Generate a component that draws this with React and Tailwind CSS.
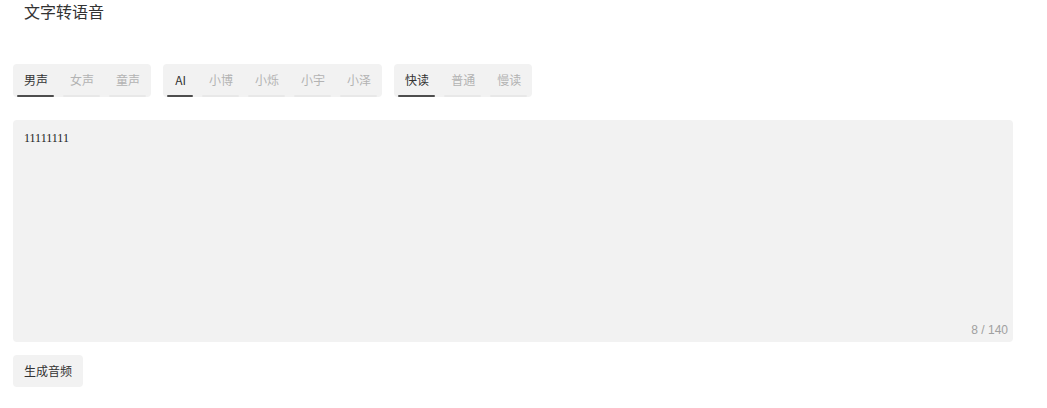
import React, { useEffect, useRef, useState } from "react";

const groups = [
  { items: ["男声", "女声", "童声"], active: 0 },
  { items: ["AI", "小博", "小烁", "小宇", "小泽"], active: 0 },
  { items: ["快读", "普通", "慢读"], active: 0 },
];

function TabGroup({ items, initial }) {
  const [active, setActive] = useState(initial);
  return (
    <div className="flex h-[33px] rounded bg-[#f2f2f2]">
      {items.map((label, i) => (
        <button
          key={label}
          onClick={() => setActive(i)}
          className="flex flex-col h-full min-w-[35px]"
        >
          <span
            className={`flex-1 flex items-center justify-center px-[11px] text-xs ${
              i === active ? "text-[#333]" : "text-[#b3b3b3]"
            }`}
          >
            {label}
          </span>
          <span
            className={`h-[2px] ml-1 mr-[5px] rounded-full ${
              i === active ? "bg-[#4d4d4d]" : "bg-[#e8e8e8]"
            }`}
          />
        </button>
      ))}
    </div>
  );
}

export default function App() {
  const [text, setText] = useState("11111111");
  const ref = useRef(null);

  useEffect(() => {
    const el = ref.current;
    if (el) {
      el.focus();
      el.setSelectionRange(el.value.length, el.value.length);
    }
  }, []);

  return (
    <div
      className="w-full min-h-screen bg-white px-[13px]"
      style={{ fontFamily: '"Noto Sans CJK SC", "Noto Sans", sans-serif' }}
    >
      <h1 className="pl-[11px] h-[22px] leading-[22px] text-base font-normal text-[#333]">
        文字转语音
      </h1>

      {/* voice options */}
      <div className="flex gap-3 mt-[42px]">
        {groups.map((g, i) => (
          <TabGroup key={i} items={g.items} initial={g.active} />
        ))}
      </div>

      {/* input */}
      <div className="flex flex-col w-[1000px] mt-[23px] h-[222px] rounded bg-[#f2f2f2]">
        <textarea
          ref={ref}
          autoFocus
          value={text}
          maxLength={140}
          onChange={(e) => setText(e.target.value)}
          className="flex-1 resize-none bg-transparent outline-none px-[11px] pt-[10px] text-xs leading-4 text-[#222] caret-black"
          style={{ fontFamily: '"Liberation Serif", serif' }}
        />
        <div className="text-right pr-[5px] pb-[4px] text-xs leading-[16px] text-[#a0a0a0] font-['Liberation_Sans',sans-serif]">
          {text.length} / 140
        </div>
      </div>

      <button className="mt-[13px] h-8 px-[11px] rounded bg-[#f2f2f2] text-xs text-[#333]">
        生成音频
      </button>
    </div>
  );
}
